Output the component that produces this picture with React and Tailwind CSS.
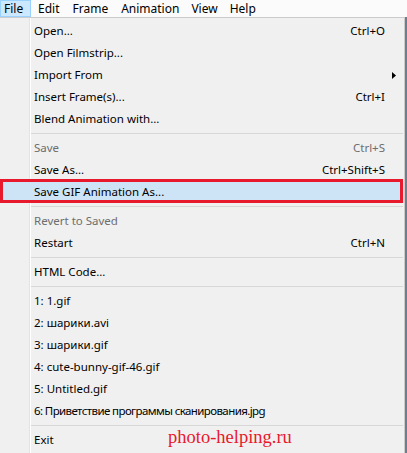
import React from "react";

const items = [
  { t: "Open...", s: "Ctrl+O" },
  { t: "Open Filmstrip..." },
  { t: "Import From", arrow: true },
  { t: "Insert Frame(s)...", s: "Ctrl+I" },
  { t: "Blend Animation with..." },
  { sep: true },
  { t: "Save", s: "Ctrl+S", dis: true },
  { t: "Save As...", s: "Ctrl+Shift+S" },
  { t: "Save GIF Animation As...", hl: true },
  { sep: true },
  { t: "Revert to Saved", dis: true },
  { t: "Restart", s: "Ctrl+N" },
  { sep: true },
  { t: "HTML Code..." },
  { sep: true },
  { t: "1: 1.gif" },
  { t: "2: шарики.avi" },
  { t: "3: шарики.gif" },
  { t: "4: cute-bunny-gif-46.gif" },
  { t: "5: Untitled.gif" },
  { t: "6: Приветствие программы сканирования.jpg", cy: true },
  { sep: true },
  { t: "Exit" },
];

export default function App() {
  return (
    <div
      className="w-[407px] h-[453px] overflow-hidden bg-[#f0f0f0] text-[11.5px] text-black relative"
      style={{ fontFamily: '"Noto Sans", "Open Sans", sans-serif' }}
    >
      {/* menubar */}
      <div className="h-[17px] bg-[#fbfbfb] flex items-stretch leading-none text-[12px]">
        <div className="w-[31px] bg-[#cce8ff] border border-[#99d1ff] flex items-center pl-[3px]">File</div>
        <div className="pl-[7px] pr-[7px] flex items-center">Edit</div>
        <div className="pl-[6px] pr-[6px] flex items-center">Frame</div>
        <div className="pl-[7px] pr-[6px] flex items-center">Animation</div>
        <div className="pl-[6px] pr-[6px] flex items-center">View</div>
        <div className="pl-[6px] pr-[6px] flex items-center">Help</div>
      </div>
      <div className="flex h-[436px]">
        <div className="w-[405px] border-t border-r border-[#cccccc] bg-[#f0f0f0] pt-[2px] relative">
          <div className="absolute left-[29px] top-0 bottom-0 w-px bg-[#e3e3e3]" />
          <div className="absolute left-[30px] top-0 bottom-0 w-px bg-white" />
          {items.map((it, i) =>
            it.sep ? (
              <div key={i} className="h-[7px] flex items-center pl-[30px] pr-[1px]">
                <div className="h-px w-full bg-[#d7d7d7]" />
              </div>
            ) : (
              <div
                key={i}
                className={
                  "h-[22px] flex items-center justify-between pl-[34px] pr-[19px] relative " +
                  (it.hl ? "bg-[#cde4f7] " : "") +
                  (it.dis ? "text-[#6d6d6d]" : "")
                }
              >
                <span className={"relative whitespace-nowrap " + (it.cy ? "tracking-[-0.6px]" : "")}>{it.t}</span>
                {it.s && <span className="whitespace-nowrap">{it.s}</span>}
                {it.arrow && (
                  <svg width="4" height="7" viewBox="0 0 4 7" className="mr-[-11px]">
                    <path d="M0 0 L4 3.5 L0 7 Z" fill="#000" />
                  </svg>
                )}
                {it.hl && (
                  <div className="absolute left-0 right-[1px] -top-[2px] bottom-0 border-[3px] border-[#e8192c]" />
                )}
              </div>
            )
          )}
        </div>
        <div className="w-[2px] bg-[#6b7f93]" />
      </div>
      <div
        className="absolute left-[168px] top-[428px] text-[#e8192c] text-[18.5px] leading-none"
        style={{ fontFamily: '"Liberation Serif", serif' }}
      >
        photo-helping.ru
      </div>
    </div>
  );
}
